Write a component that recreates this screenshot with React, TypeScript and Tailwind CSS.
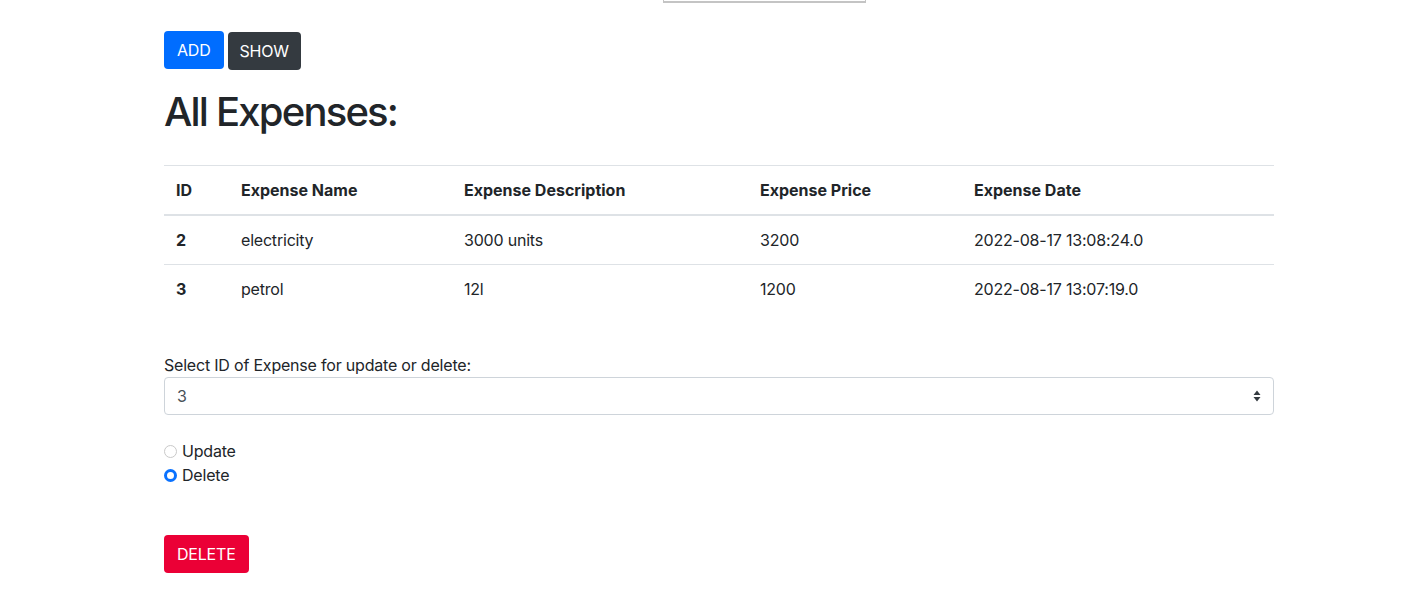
import { useState } from "react";

type Expense = {
  id: number;
  name: string;
  description: string;
  price: number;
  date: string;
};

const expenses: Expense[] = [
  { id: 2, name: "electricity", description: "3000 units", price: 3200, date: "2022-08-17 13:08:24.0" },
  { id: 3, name: "petrol", description: "12l", price: 1200, date: "2022-08-17 13:07:19.0" },
];

export default function App() {
  const [mode, setMode] = useState("delete");
  const [selected, setSelected] = useState("3");

  return (
    <div className="min-h-[598px] bg-white text-[#212529] font-['Inter','Liberation_Sans',sans-serif] text-[16px] tracking-[-0.2px]">
      {/* tail of the field scrolled above */}
      <div className="flex justify-center">
        <div className="ml-[114px] h-[3px] w-[203px] border-x border-b-2 border-[#c4c4c4]" />
      </div>

      <div className="ml-[164px] w-[1110px] pt-[28px]">
        <div className="flex items-start gap-[4px]">
          <button className="h-[38px] px-[13px] rounded-[4px] bg-[#006dff] text-white text-[16px] leading-[38px]">
            ADD
          </button>
          <button className="mt-[1px] h-[38px] px-[12px] rounded-[4px] bg-[#343a40] text-white text-[16px] leading-[38px]">
            SHOW
          </button>
        </div>

        <h1 className="mt-[18px] text-[40px] leading-[48px] font-medium tracking-[-1.8px]">All Expenses:</h1>

        <table className="mt-[29px] w-full border-collapse text-left">
          <thead className="tracking-[0px]">
            <tr className="border-t border-[#dee2e6]">
              <th className="w-[65px] px-[12px] py-[12px] font-bold border-b-2 border-[#dee2e6] leading-[24px]">ID</th>
              <th className="w-[223px] px-[12px] py-[12px] font-bold border-b-2 border-[#dee2e6] leading-[24px]">Expense Name</th>
              <th className="w-[296px] px-[12px] py-[12px] font-bold border-b-2 border-[#dee2e6] leading-[24px]">Expense Description</th>
              <th className="w-[214px] px-[12px] py-[12px] font-bold border-b-2 border-[#dee2e6] leading-[24px]">Expense Price</th>
              <th className="px-[12px] py-[12px] font-bold border-b-2 border-[#dee2e6] leading-[24px]">Expense Date</th>
            </tr>
          </thead>
          <tbody>
            {expenses.map((e, i) => (
              <tr key={e.id} className={i > 0 ? "border-t border-[#dee2e6]" : ""}>
                <td className="px-[12px] py-[12px] font-bold leading-[24px]">{e.id}</td>
                <td className="px-[12px] py-[12px] leading-[24px]">{e.name}</td>
                <td className="px-[12px] py-[12px] leading-[24px]">{e.description}</td>
                <td className="px-[12px] py-[12px] leading-[24px]">{e.price}</td>
                <td className="px-[12px] py-[12px] leading-[24px]">{e.date}</td>
              </tr>
            ))}
          </tbody>
        </table>

        <div className="mt-[40px]">
          <label className="block leading-[24px]">Select ID of Expense for update or delete:</label>
          <div className="relative">
            <select
              value={selected}
              onChange={(ev) => setSelected(ev.target.value)}
              className="block w-full h-[38px] appearance-none rounded-[4px] border border-[#ced4da] bg-white pl-[12px] pr-[30px] text-[16px] text-[#495057]"
            >
              {expenses.map((e) => (
                <option key={e.id} value={String(e.id)}>
                  {e.id}
                </option>
              ))}
            </select>
            <svg className="pointer-events-none absolute right-[13px] top-[13px]" width="8" height="12" viewBox="0 0 8 12">
              <path d="M4 0.5L7.5 5H0.5Z M4 11.5L0.5 7H7.5Z" fill="#343a40" />
            </svg>
          </div>
        </div>

        <div className="mt-[24px] flex flex-col">
          {[
            { value: "update", label: "Update" },
            { value: "delete", label: "Delete" },
          ].map((r) => (
            <label key={r.value} className="flex items-center gap-[5px] leading-[24px] cursor-pointer">
              <span
                onClick={() => setMode(r.value)}
                className={`box-border w-[13px] h-[13px] rounded-full ${
                  mode === r.value ? "border-[3.5px] border-[#0a72ff] bg-white" : "border border-[#c9c9c9] bg-white"
                }`}
              />
              <span onClick={() => setMode(r.value)}>{r.label}</span>
            </label>
          ))}
        </div>

        <button className="mt-[48px] h-[38px] px-[13px] rounded-[4px] bg-[#eb0036] text-white text-[16px] leading-[38px]">
          DELETE
        </button>
      </div>
    </div>
  );
}
